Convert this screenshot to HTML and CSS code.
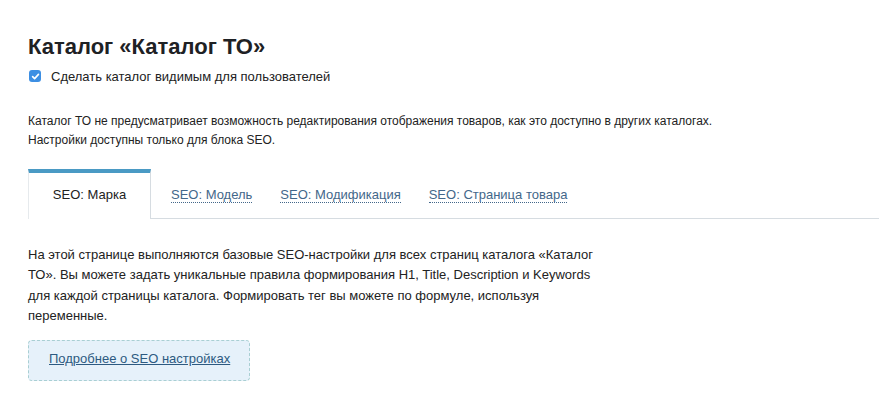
FILE: index.html
```html
<!DOCTYPE html>
<html lang="ru">
<head>
<meta charset="utf-8">
<title>Каталог ТО</title>
<link rel="stylesheet" href="styles.css">
</head>
<body>
<div class="page">
  <h1 class="title">Каталог «Каталог ТО»</h1>
  <label class="check-row">
    <span class="check-box"><svg width="9" height="9" viewBox="0 0 10 10"><path d="M1.8 5.2 L4 7.4 L8.3 2.6" fill="none" stroke="#fff" stroke-width="1.8" stroke-linecap="round" stroke-linejoin="round"/></svg></span>
    <span class="check-label">Сделать каталог видимым для пользователей</span>
  </label>
  <p class="note">Каталог ТО не предусматривает возможность редактирования отображения товаров, как это доступно в других каталогах.<br>Настройки доступны только для блока SEO.</p>
  <div class="tabs">
    <div class="tab tab-active">SEO: Марка</div>
    <div class="tab"><a class="tab-link" href="#">SEO: Модель</a></div>
    <div class="tab"><a class="tab-link" href="#">SEO: Модификация</a></div>
    <div class="tab"><a class="tab-link" href="#">SEO: Страница товара</a></div>
    <div class="tab-fill"></div>
  </div>
  <p class="desc">На этой странице выполняются базовые SEO-настройки для всех страниц каталога «Каталог ТО». Вы можете задать уникальные правила формирования H1, Title, Description и Keywords для каждой страницы каталога. Формировать тег вы можете по формуле, используя переменные.</p>
  <div class="more-box"><a class="more-link" href="#">Подробнее о SEO настройках</a></div>
</div>
</body>
</html>
```
FILE: styles.css
```css
html, body {
  margin: 0;
  padding: 0;
  background: #fff;
}
body {
  font-family: "Liberation Sans", Arial, Helvetica, sans-serif;
  color: #222;
}
.page {
  padding: 34px 0 0 28px;
}
.title {
  margin: 0;
  font-size: 22px;
  line-height: 26px;
  font-weight: bold;
  color: #1e2124;
}
.check-row {
  display: flex;
  align-items: center;
  margin-top: 6px;
  height: 20px;
}
.check-box {
  width: 12px;
  height: 12px;
  margin-left: 1px;
  border-radius: 3px;
  background: #3d8fe3;
  display: flex;
  align-items: center;
  justify-content: center;
}
.check-label {
  margin-left: 10px;
  font-size: 13px;
  color: #222;
}
.note {
  margin: 26px 0 0;
  font-size: 12px;
  line-height: 19px;
  color: #222;
}
.tabs {
  display: flex;
  margin-top: 19px;
  height: 50px;
}
.tab {
  display: flex;
  align-items: center;
  padding: 4px 8px 0 20px;
  border-bottom: 1px solid #d6dce1;
  font-size: 13px;
}
.tab-active {
  width: 123px;
  box-sizing: border-box;
  justify-content: center;
  padding: 0 0 4px;
  border-top: 4px solid #4a9ac4;
  border-left: 1px solid #e6eaed;
  border-right: 1px solid #d6dce1;
  border-bottom: none;
  color: #222;
}
.tab-fill {
  flex: 1;
  border-bottom: 1px solid #d6dce1;
}
.tab-link {
  color: #43678a;
  text-decoration: none;
  border-bottom: 1px dotted #43678a;
  line-height: 14px;
}
.desc {
  margin: 26px 0 0;
  max-width: 580px;
  font-size: 13px;
  line-height: 20.3px;
  color: #222;
}
.more-box {
  margin-top: 14px;
  width: 222px;
  height: 41px;
  box-sizing: border-box;
  border: 1px dashed #a9cfd3;
  border-radius: 4px;
  background: #e6f1fa;
  display: flex;
  align-items: center;
  padding: 0 0 4px 20px;
}
.more-link {
  font-size: 13px;
  color: #2d5a81;
  text-decoration: underline;
}
```
